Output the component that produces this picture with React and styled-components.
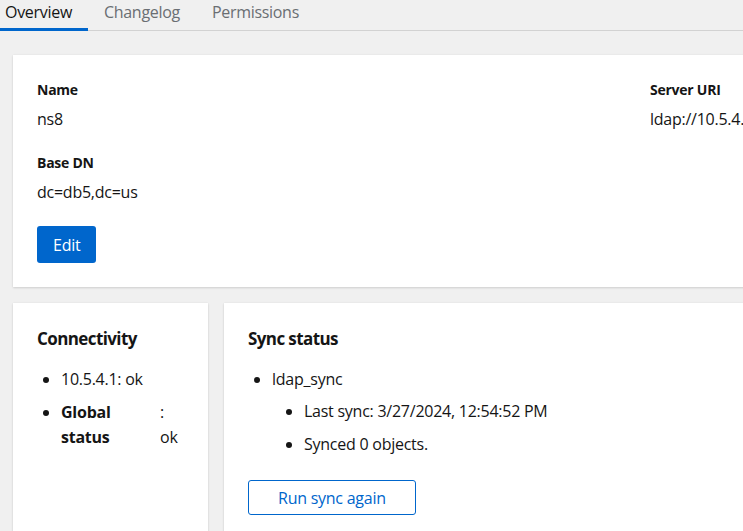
import styled, { createGlobalStyle } from "styled-components"

const Global = createGlobalStyle`
  html, body {
    margin: 0;
    padding: 0;
    background: #f0f0f0;
    overflow: hidden;
  }
  body {
    font-family: "Open Sans", "Noto Sans", sans-serif;
    color: #151515;
    font-size: 16px;
    line-height: 1.5;
    letter-spacing: -0.25px;
  }
`

const Page = styled.div`
  width: 1298px;
  margin-left: -11px;
  min-height: 531px;
`

const Tabs = styled.nav`
  display: flex;
  border-bottom: 1px solid #d2d2d2;
  background: #f0f0f0;
`

const Tab = styled.button`
  all: unset;
  padding: 0 16px 7px;
  font-family: inherit;
  font-size: 16px;
  line-height: 24px;
  letter-spacing: -0.3px;
  color: ${(p) => (p.$active ? "#151515" : "#6a6e73")};
  box-shadow: ${(p) => (p.$active ? "inset 0 -3px 0 #0066cc" : "none")};
  margin-bottom: -1px;
  cursor: pointer;
`

const Body = styled.main`
  padding: 24px;
  display: flex;
  flex-direction: column;
  gap: 16px;
`

const Card = styled.section`
  background: #fff;
  padding: 24px;
  box-shadow: 0 1px 2px 0 rgba(3, 3, 3, 0.12), 0 0 2px 0 rgba(3, 3, 3, 0.06);
  box-sizing: border-box;
  ${(p) => (p.$width ? `width: ${p.$width}px; flex: none;` : "flex: 1;")}
  min-height: ${(p) => p.$minHeight || 0}px;
`

const Row = styled.div`
  display: flex;
  gap: 16px;
`

const DescList = styled.dl`
  margin: 0;
  display: grid;
  grid-template-columns: repeat(2, 1fr);
  column-gap: 24px;
  row-gap: 21px;
`

const Group = styled.div`
  display: flex;
  flex-direction: column;
  gap: 7px;
`

const Term = styled.dt`
  font-size: 14px;
  line-height: 21px;
  font-weight: 700;
`

const Desc = styled.dd`
  margin: 0;
  font-size: 16px;
  line-height: 24px;
`

const PrimaryButton = styled.button`
  margin-top: 22px;
  height: 37px;
  box-sizing: border-box;
  font-family: inherit;
  font-size: 16px;
  line-height: 24px;
  letter-spacing: inherit;
  padding: 0 16px;
  border: none;
  border-radius: 3px;
  background: #0066cc;
  color: #fff;
  cursor: pointer;
`

const SecondaryButton = styled.button`
  margin-top: 24px;
  height: 35px;
  box-sizing: border-box;
  font-family: inherit;
  font-size: 16px;
  line-height: 24px;
  letter-spacing: inherit;
  padding: 0 29px;
  border: 1px solid #0066cc;
  border-radius: 3px;
  background: #fff;
  color: #0066cc;
  cursor: pointer;
`

const CardTitle = styled.h2`
  margin: 0 0 16px;
  font-size: 17px;
  line-height: 24px;
  font-weight: 700;
  letter-spacing: -0.6px;
`

const List = styled.ul`
  margin: ${(p) => (p.$nested ? "8px 0 0" : "0")};
  padding-left: ${(p) => (p.$nested ? "32px" : "24px")};
  list-style: disc;
  display: flex;
  flex-direction: column;
  gap: 9px;
`

const Item = styled.li`
  line-height: 24px;
`

const Pair = styled.div`
  display: flex;
  gap: 4px;
`

const PairLabel = styled.span`
  width: 95px;
  font-weight: 700;
  line-height: 25px;
`

const PairValue = styled.span`
  width: min-content;
  line-height: 25px;
`

export default function App() {
  return (
    <Page>
      <Global />
      <Tabs>
        <Tab $active>Overview</Tab>
        <Tab>Changelog</Tab>
        <Tab>Permissions</Tab>
      </Tabs>
      <Body>
        <Card>
          <DescList>
            <Group>
              <Term>Name</Term>
              <Desc>ns8</Desc>
            </Group>
            <Group>
              <Term>Server URI</Term>
              <Desc>ldap://10.5.4.1</Desc>
            </Group>
            <Group>
              <Term>Base DN</Term>
              <Desc>dc=db5,dc=us</Desc>
            </Group>
          </DescList>
          <PrimaryButton>Edit</PrimaryButton>
        </Card>
        <Row>
          <Card $width={195} $minHeight={260}>
            <CardTitle>Connectivity</CardTitle>
            <List>
              <Item>10.5.4.1: ok</Item>
              <Item>
                <Pair>
                  <PairLabel>Global status</PairLabel>
                  <PairValue>: ok</PairValue>
                </Pair>
              </Item>
            </List>
          </Card>
          <Card $minHeight={260}>
            <CardTitle>Sync status</CardTitle>
            <List>
              <Item>
                ldap_sync
                <List $nested>
                  <Item>Last sync: 3/27/2024, 12:54:52 PM</Item>
                  <Item>Synced 0 objects.</Item>
                </List>
              </Item>
            </List>
            <SecondaryButton>Run sync again</SecondaryButton>
          </Card>
        </Row>
      </Body>
    </Page>
  )
}
